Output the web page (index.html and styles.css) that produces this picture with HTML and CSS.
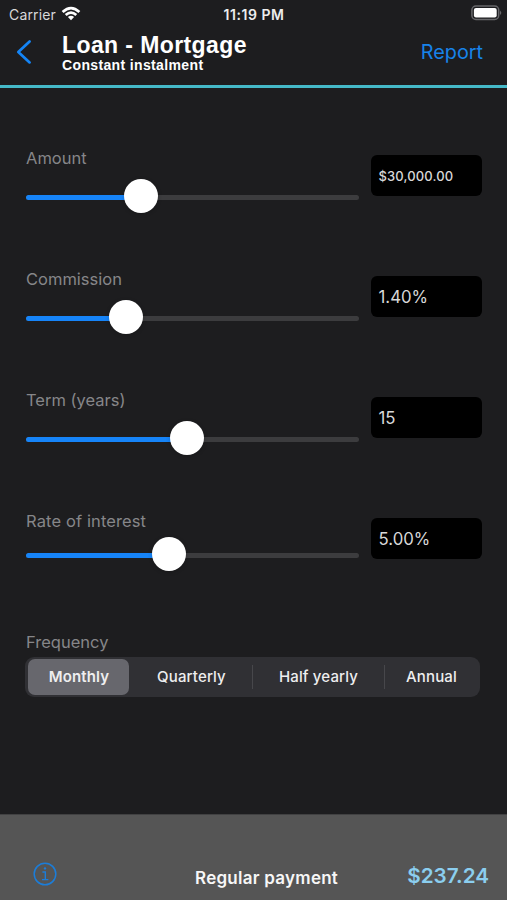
FILE: index.html
```html
<!DOCTYPE html>
<html lang="en">
<head>
<meta charset="utf-8">
<title>Loan - Mortgage</title>
<link rel="stylesheet" href="styles.css">
</head>
<body>
<div class="app">
  <div class="status">
    <div class="carrier"><span>Carrier</span>
      <svg class="wifi" width="20" height="15" viewBox="0 0 20 15" fill="none" stroke="#fff" stroke-width="2.7"><path d="M1.6 6Q10-1.9 18.4 6M4.7 9.1Q10 4.3 15.3 9.1"/><path d="M10 14.2L6.9 11Q10 8.6 13.1 11Z" fill="#fff" stroke="none"/></svg>
    </div>
    <span class="time">11:19 PM</span>
    <svg class="battery" width="31" height="16" viewBox="0 0 31 16"><rect x=".9" y="1.1" width="26.8" height="13.4" rx="4" fill="none" stroke="#67676a" stroke-width="1.5"/><rect x="2.9" y="3" width="22.8" height="9.6" rx="2.1" fill="#fff"/><path d="M29 5.5q2.6 2.3 0 4.6z" fill="#67676a"/></svg>
  </div>
  <header class="nav">
    <svg class="back" width="16" height="26" viewBox="0 0 16 26" fill="none" stroke="#1484f5" stroke-width="2.7" stroke-linecap="round" stroke-linejoin="round"><path d="M13.6 2.4L2.3 13L13.6 23.4"/></svg>
    <div class="titles"><h1>Loan - Mortgage</h1><p>Constant instalment</p></div>
    <span class="report">Report</span>
  </header>
  <main>
    <section class="row"><div class="control"><label class="l-amount">Amount</label><div class="slider amount"><i class="fill"></i><i class="knob"></i></div></div><div class="value small"><span>$30,000.00</span></div></section>
    <section class="row"><div class="control"><label class="l-commission">Commission</label><div class="slider commission"><i class="fill"></i><i class="knob"></i></div></div><div class="value"><span>1.40%</span></div></section>
    <section class="row"><div class="control"><label class="l-term">Term (years)</label><div class="slider term"><i class="fill"></i><i class="knob"></i></div></div><div class="value"><span>15</span></div></section>
    <section class="row"><div class="control"><label class="l-rate">Rate of interest</label><div class="slider rate"><i class="fill"></i><i class="knob"></i></div></div><div class="value"><span>5.00%</span></div></section>
    <section class="frequency"><label class="l-frequency">Frequency</label>
      <div class="segments"><span class="selected">Monthly</span><span>Quarterly</span><span class="divided">Half yearly</span><span class="divided">Annual</span></div>
    </section>
  </main>
  <footer>
    <svg class="info" width="24" height="24" viewBox="0 0 24 24" fill="none" stroke="#1c7dd8" stroke-width="1.5"><circle cx="12" cy="12" r="10.8"/><path d="M9.4 10H12.3V17.3M9 17.6H15.4" stroke-width="1.4"/><circle cx="12" cy="6.4" r="1.2" fill="#1c7dd8" stroke="none"/></svg>
    <strong class="caption">Regular payment</strong>
    <strong class="total">$237.24</strong>
  </footer>
</div>
</body>
</html>
```
FILE: styles.css
```css
* { box-sizing: border-box; }
body { margin: 0; background: #1d1d1f; color: #fff; font-family: Inter, "Liberation Sans", sans-serif; }
.app { width: 507px; height: 900px; display: flex; flex-direction: column; overflow: hidden; white-space: nowrap; }
.status { height: 28px; flex: none; display: grid; grid-template-columns: 1fr 64px 1fr; align-items: center; padding: 0 6px 0 9px; font-size: 14px; }
.carrier { display: flex; align-items: center; gap: 5px; color: #d8d8d9; letter-spacing: .15px; }
.carrier span { width: 47px; }
.wifi { margin-top: -2px; }
.time { margin-left: -2px; font-size: 14px; font-weight: 600; letter-spacing: .55px; text-align: center; color: #ededee; }
.battery { justify-self: end; margin-right: -1px; margin-top: -2px; }
.nav { height: 60px; flex: none; display: flex; padding: 0 24px 0 16px; border-bottom: 3px solid #45b9c8; }
.back { margin-top: 11px; }
.titles { margin: 5px 0 0 30px; font-family: "Liberation Sans", sans-serif; flex: 1; }
h1 { margin: 0; font-size: 23px; line-height: 24px; letter-spacing: .4px; }
p { margin: 0; font-size: 14px; line-height: 17px; font-weight: 700; letter-spacing: .36px; }
.report { margin-top: 12px; font-size: 19.8px; line-height: 25px; color: #1783ea; }
main { flex: 1; padding: 58px 25px 0 26px; }
.row { height: 121px; display: flex; justify-content: space-between; }
.control { width: 333px; }
label { display: block; font-size: 16.5px; line-height: 24px; color: #868689; }
.l-rate { letter-spacing: .12px; }
.slider { --position: 115px; position: relative; margin-top: 25px; height: 5px; border-radius: 3px; background: #3c3c3e; }
.fill { display: block; width: var(--position); height: 5px; border-radius: 3px; background: #1684f8; }
.knob { position: absolute; left: calc(var(--position) - 17px); top: -16px; width: 34px; height: 34px; border-radius: 50%; background: #fff; box-shadow: 0 1px 4px #0003; }
.commission { --position: 100px; }
.term { --position: 161px; }
.rate { --position: 143px; margin-top: 20px; }
.value { width: 111.5px; height: 41px; margin-top: 9px; padding-left: 8px; display: flex; align-items: center; border-radius: 6px; background: #000; color: #d8d8d9; font-size: 16.8px; }
.small { font-size: 13px; font-weight: 500; letter-spacing: .15px; }
.frequency label { line-height: 25px; }
.segments { margin: 2px 2px 0 -1px; padding: 2px; height: 39.5px; display: grid; grid-template-columns: 103px 122px 132px 1fr; background: #303034; border-radius: 9px; }
.segments span { position: relative; display: flex; justify-content: center; align-items: center; font-size: 15px; font-weight: 500; letter-spacing: .15px; padding: 0 0 1px 1px; color: #eeeeef; }
.segments .selected { margin: 0 1px; background: #67676d; border-radius: 7px; font-weight: 600; }
.divided::before { content: ""; position: absolute; left: 0; top: 6px; width: 1px; height: 24px; background: #47474b; }
footer { height: 86px; flex: none; display: grid; grid-template-columns: 162px 1fr auto; align-items: start; padding: 0 18px 0 33px; background: #555; border-top: 1px solid #414142; }
.info { margin-top: 47px; }
.caption { margin-top: 51px; font-size: 17px; line-height: 24px; font-weight: 600; letter-spacing: .26px; color: #f7f7f7; }
.total { margin-top: 48px; font-size: 20.7px; line-height: 25px; font-weight: 600; color: #8bceef; }
```
